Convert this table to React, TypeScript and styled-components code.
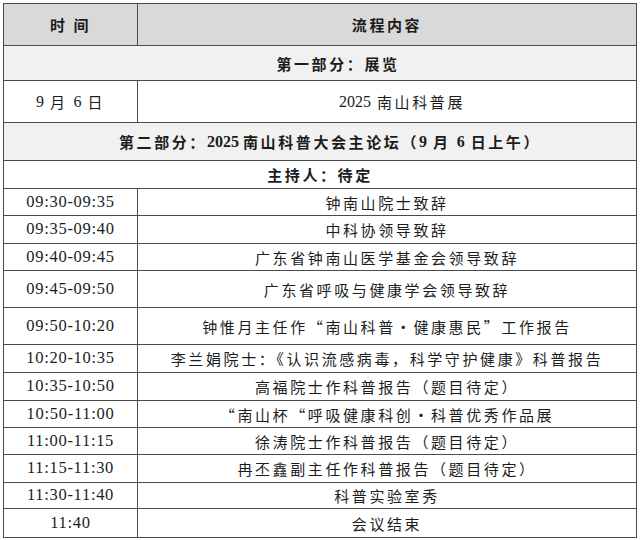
import React from "react";
import styled, { createGlobalStyle } from "styled-components";

const Global = createGlobalStyle`
  html, body { margin: 0; padding: 0; background: #ffffff; }
  body { width: 640px; height: 540px; overflow: hidden; }
`;

const Page = styled.div`
  padding: 3px 0 0 3px;
  width: 640px;
  height: 540px;
  box-sizing: border-box;
  background: #fff;
`;

const Table = styled.div`
  width: 634px;
  display: flex;
  flex-direction: column;
  border: 1px solid #4a4a4a;
  border-bottom-width: 0;
  box-sizing: border-box;
  font-family: "Liberation Serif", "Noto Sans CJK SC", serif;
  color: #1c1c1c;
`;

type Tone = "head" | "section" | "plain";

const Row = styled.div<{ $h: number; $tone?: Tone; $span?: boolean }>`
  display: grid;
  grid-template-columns: ${(p) => (p.$span ? "1fr" : "134px 1fr")};
  height: ${(p) => p.$h}px;
  box-sizing: border-box;
  border-bottom: 1px solid #4a4a4a;
  background: ${(p) =>
    p.$tone === "head" ? "#d9d9d9" : p.$tone === "section" ? "#f1f1f1" : "#ffffff"};
`;

const Cell = styled.div<{ $divider?: boolean; $bold?: boolean; $shift?: number }>`
  display: flex;
  align-items: center;
  justify-content: center;
  white-space: pre;
  border-right: ${(p) => (p.$divider ? "1px solid #4a4a4a" : "none")};
  font-size: 15px;
  letter-spacing: 2.6px;
  font-weight: ${(p) => (p.$bold ? 700 : 400)};
  padding-left: ${(p) => p.$shift ?? 0}px;
  line-height: 1;
`;

const Time = styled.span`
  font-family: "Liberation Serif", serif;
  font-size: 16.5px;
  letter-spacing: 0.7px;
`;

const Num = styled.span`
  font-family: "Liberation Serif", serif;
  font-size: 16px;
  letter-spacing: 0;
`;

const Cjk = styled.span`
  font-family: "Noto Sans CJK SC", sans-serif;
`;

type Item = { h: number; time: React.ReactNode; text: React.ReactNode };

const items: Item[] = [
  { h: 27, time: "09:30-09:35", text: <Cjk>钟南山院士致辞</Cjk> },
  { h: 28, time: "09:35-09:40", text: <Cjk>中科协领导致辞</Cjk> },
  { h: 27, time: "09:40-09:45", text: <Cjk>广东省钟南山医学基金会领导致辞</Cjk> },
  { h: 37, time: "09:45-09:50", text: <Cjk>广东省呼吸与健康学会领导致辞</Cjk> },
  {
    h: 37,
    time: "09:50-10:20",
    text: <Cjk>钟惟月主任作“南山科普·健康惠民”工作报告</Cjk>,
  },
  {
    h: 28,
    time: "10:20-10:35",
    text: <Cjk>李兰娟院士：《认识流感病毒，科学守护健康》科普报告</Cjk>,
  },
  { h: 28, time: "10:35-10:50", text: <Cjk>高福院士作科普报告（题目待定）</Cjk> },
  {
    h: 27,
    time: "10:50-11:00",
    text: <Cjk>“南山杯“呼吸健康科创·科普优秀作品展</Cjk>,
  },
  { h: 27, time: "11:00-11:15", text: <Cjk>徐涛院士作科普报告（题目待定）</Cjk> },
  { h: 28, time: "11:15-11:30", text: <Cjk>冉丕鑫副主任作科普报告（题目待定）</Cjk> },
  { h: 26, time: "11:30-11:40", text: <Cjk>科普实验室秀</Cjk> },
  { h: 29, time: "11:40", text: <Cjk>会议结束</Cjk> },
];

export default function App() {
  return (
    <>
      <Global />
      <Page>
        <Table>
          <Row $h={42} $tone="head">
            <Cell $divider $bold>
              <Cjk>时 间</Cjk>
            </Cell>
            <Cell $bold>
              <Cjk>流程内容</Cjk>
            </Cell>
          </Row>
          <Row $h={35} $tone="section" $span>
            <Cell $bold $shift={36}>
              <Cjk>第一部分：展览</Cjk>
            </Cell>
          </Row>
          <Row $h={42}>
            <Cell $divider>
              <Num>9</Num>
              <Cjk> 月 </Cjk>
              <Num>6</Num>
              <Cjk> 日</Cjk>
            </Cell>
            <Cell $shift={30}>
              <Num>2025</Num>
              <Cjk> 南山科普展</Cjk>
            </Cell>
          </Row>
          <Row $h={38} $tone="section" $span>
            <Cell $bold $shift={20}>
              <Cjk>第二部分：</Cjk>
              <Num>2025 </Num>
              <Cjk>南山科普大会主论坛（</Cjk>
              <Num>9</Num>
              <Cjk> 月 </Cjk>
              <Num>6</Num>
              <Cjk> 日上午）</Cjk>
            </Cell>
          </Row>
          <Row $h={28} $span>
            <Cell $bold>
              <Cjk>主持人：待定</Cjk>
            </Cell>
          </Row>
          {items.map((it, i) => (
            <Row key={i} $h={it.h}>
              <Cell $divider>
                <Time>{it.time}</Time>
              </Cell>
              <Cell>{it.text}</Cell>
            </Row>
          ))}
        </Table>
      </Page>
    </>
  );
}
